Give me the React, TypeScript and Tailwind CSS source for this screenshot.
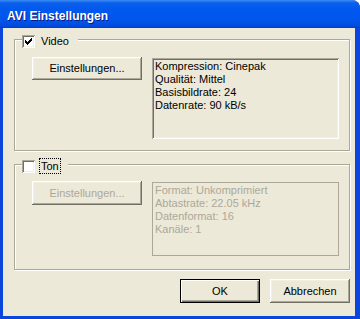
import React from "react";

const sunken =
  "shadow-[inset_1px_1px_0_#aca899,inset_-1px_-1px_0_#ffffff,inset_2px_2px_0_#716f64,inset_-2px_-2px_0_#f1efe2]";
const raised =
  "shadow-[inset_-1px_-1px_0_#716f64,inset_1px_1px_0_#ffffff,inset_-2px_-2px_0_#aca899,inset_2px_2px_0_#f1efe2]";

function Check({ checked }: { checked: boolean }) {
  return (
    <div className={"relative w-[13px] h-[13px] shrink-0 bg-white " + sunken}>
      {checked && (
        <svg width="13" height="13" viewBox="0 0 13 13" className="absolute left-0 top-0" shapeRendering="crispEdges">
          <path
            d="M3 5h1v3h-1z M4 6h1v3h-1z M5 7h1v3h-1z M6 6h1v3h-1z M7 5h1v3h-1z M8 4h1v3h-1z M9 3h1v3h-1z"
            fill="#000"
          />
        </svg>
      )}
    </div>
  );
}

function Legend({ label, checked, focus }: { label: string; checked: boolean; focus?: boolean }) {
  return (
    <div className="absolute left-[7px] top-[-7px] flex items-center bg-[#ece9d8] pr-[7px]">
      <Check checked={checked} />
      <span
        className={
          "ml-[4px] px-[1px] leading-[14px] border " +
          (focus ? "border-dotted border-black" : "border-transparent")
        }
      >
        {label}
      </span>
    </div>
  );
}

export default function App() {
  return (
    <div className="w-[360px] h-[319px] bg-white font-['Liberation_Sans',Arial,sans-serif] text-[11px] text-black overflow-hidden">
      <div className="w-full h-full flex flex-col rounded-tr-[8px] overflow-hidden bg-[#0a45dc]">
        <div className="h-[28px] shrink-0 pl-[7px] pt-[9px] bg-[linear-gradient(to_bottom,#3d8ef6_0px,#0b5fea_3px,#0058ee_10px,#0056ec_20px,#004bdf_26px,#003ec8_28px)]">
          <span className="block text-white font-bold text-[12px] leading-[14px] [text-shadow:1px_1px_0_#0a1883]">
            AVI Einstellungen
          </span>
        </div>
        <div className="flex-1 ml-[3px] mr-[5px] mb-[3px] bg-[#ece9d8] pl-[11px] pt-[11px] flex flex-col">
          {/* Video group */}
          <div className="relative w-[336px] h-[112px] shrink-0 border border-[#aca899] shadow-[inset_1px_1px_0_#ffffff,1px_1px_0_#ffffff]">
            <Legend label="Video" checked />
            <div className="flex items-start pl-[17px] pt-[17px]">
              <div className={"w-[110px] h-[23px] flex items-center justify-center " + raised}>
                Einstellungen...
              </div>
              <div className={"ml-[10px] mt-[1px] w-[187px] h-[81px] pl-[3px] pt-[2px] leading-[13px] " + sunken}>
                <div>Kompression: Cinepak</div>
                <div>Qualität: Mittel</div>
                <div>Basisbildrate: 24</div>
                <div>Datenrate: 90 kB/s</div>
              </div>
            </div>
          </div>

          {/* Ton group */}
          <div className="relative mt-[13px] w-[336px] h-[106px] shrink-0 border border-[#aca899] shadow-[inset_1px_1px_0_#ffffff,1px_1px_0_#ffffff]">
            <Legend label="Ton" checked={false} focus />
            <div className="flex items-start pl-[17px] pt-[16px]">
              <div className={"w-[110px] h-[24px] flex items-center justify-center text-[#aca899] " + raised}>
                Einstellungen...
              </div>
              <div className="ml-[10px] mt-[1px] w-[187px] h-[74px] border border-[#aca899] pl-[2px] pt-[1px] leading-[13px] text-[#aca899]">
                <div>Format: Unkomprimiert</div>
                <div>Abtastrate: 22.05 kHz</div>
                <div>Datenformat: 16</div>
                <div>Kanäle: 1</div>
              </div>
            </div>
          </div>

          {/* Buttons */}
          <div className="mt-[9px] w-[336px] flex justify-end gap-[10px]">
            <div className="w-[80px] h-[24px] flex items-center justify-center border border-black shadow-[inset_1px_1px_0_#ffffff,inset_-1px_-1px_0_#716f64,inset_-2px_-2px_0_#aca899]">
              OK
            </div>
            <div className={"w-[80px] h-[24px] flex items-center justify-center " + raised}>
              Abbrechen
            </div>
          </div>
        </div>
      </div>
    </div>
  );
}
